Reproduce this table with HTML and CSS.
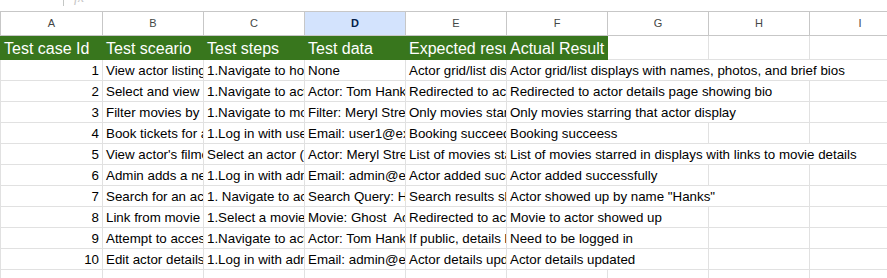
FILE: index.html
```html
<!DOCTYPE html>
<html>
<head>
<meta charset="utf-8">
<link rel="stylesheet" href="styles.css">
</head>
<body>
<div class="sheet">
  <div class="topbar">
    <span class="fxsep"></span>
    <span class="fx">fx</span>
  </div>
  <div class="row colhead">
    <div class="c first">A</div>
    <div class="c">B</div>
    <div class="c">C</div>
    <div class="c sel">D</div>
    <div class="c">E</div>
    <div class="c">F</div>
    <div class="c">G</div>
    <div class="c">H</div>
    <div class="c">I</div>
  </div>
  <div class="row hdr">
    <div class="c g first">Test case Id</div>
    <div class="c g">Test sceario</div>
    <div class="c g">Test steps</div>
    <div class="c g">Test data</div>
    <div class="c g">Expected result</div>
    <div class="c g">Actual Result</div>
    <div class="c"></div>
    <div class="c"></div>
    <div class="c"></div>
  </div>

  <div class="row data">
    <div class="c first num">1</div>
    <div class="c">View actor listing page</div>
    <div class="c">1.Navigate to home page</div>
    <div class="c">None</div>
    <div class="c">Actor grid/list displays with names</div>
    <div class="c s4">Actor grid/list displays with names, photos, and brief bios</div>
  </div>
  <div class="row data">
    <div class="c first num">2</div>
    <div class="c">Select and view actor details</div>
    <div class="c">1.Navigate to actors page</div>
    <div class="c">Actor: Tom Hanks</div>
    <div class="c">Redirected to actor details page</div>
    <div class="c s3">Redirected to actor details page showing bio</div>
    <div class="c"></div>
  </div>
  <div class="row data">
    <div class="c first num">3</div>
    <div class="c">Filter movies by actor</div>
    <div class="c">1.Navigate to movies page</div>
    <div class="c">Filter: Meryl Streep</div>
    <div class="c">Only movies starring that actor</div>
    <div class="c s3">Only movies starring that actor display</div>
    <div class="c"></div>
  </div>
  <div class="row data">
    <div class="c first num">4</div>
    <div class="c">Book tickets for a movie</div>
    <div class="c">1.Log in with user account</div>
    <div class="c">Email: user1@example.com</div>
    <div class="c">Booking succeeds</div>
    <div class="c s2">Booking succeess</div>
    <div class="c"></div>
    <div class="c"></div>
  </div>
  <div class="row data">
    <div class="c first num">5</div>
    <div class="c">View actor's filmography</div>
    <div class="c">Select an actor (Meryl Streep)</div>
    <div class="c">Actor: Meryl Streep</div>
    <div class="c">List of movies starred in</div>
    <div class="c s4">List of movies starred in displays with links to movie details</div>
  </div>
  <div class="row data">
    <div class="c first num">6</div>
    <div class="c">Admin adds a new actor</div>
    <div class="c">1.Log in with admin account</div>
    <div class="c">Email: admin@example.com</div>
    <div class="c">Actor added successfully</div>
    <div class="c s2">Actor added successfully</div>
    <div class="c"></div>
    <div class="c"></div>
  </div>
  <div class="row data">
    <div class="c first num">7</div>
    <div class="c">Search for an actor</div>
    <div class="c">1. Navigate to actors page</div>
    <div class="c">Search Query: Hanks</div>
    <div class="c">Search results show</div>
    <div class="c s3">Actor showed up by name "Hanks"</div>
    <div class="c"></div>
  </div>
  <div class="row data">
    <div class="c first num">8</div>
    <div class="c">Link from movie to actor</div>
    <div class="c">1.Select a movie</div>
    <div class="c">Movie: Ghost&nbsp; Actor: Patrick</div>
    <div class="c">Redirected to actor page</div>
    <div class="c s2">Movie to actor showed up</div>
    <div class="c"></div>
    <div class="c"></div>
  </div>
  <div class="row data">
    <div class="c first num">9</div>
    <div class="c">Attempt to access actor page</div>
    <div class="c">1.Navigate to actor page</div>
    <div class="c">Actor: Tom Hanks</div>
    <div class="c">If public, details load</div>
    <div class="c s2">Need to be logged in</div>
    <div class="c"></div>
    <div class="c"></div>
  </div>
  <div class="row data">
    <div class="c first num">10</div>
    <div class="c">Edit actor details</div>
    <div class="c">1.Log in with admin account</div>
    <div class="c">Email: admin@example.com</div>
    <div class="c">Actor details updated</div>
    <div class="c s2">Actor details updated</div>
    <div class="c"></div>
    <div class="c"></div>
  </div>
  <div class="row data">
    <div class="c first"></div>
    <div class="c"></div>
    <div class="c"></div>
    <div class="c"></div>
    <div class="c"></div>
    <div class="c"></div>
    <div class="c"></div>
    <div class="c"></div>
    <div class="c"></div>
  </div>
</div>
</body>
</html>
```

FILE: styles.css
```css
* { box-sizing: border-box; }
html, body {
  margin: 0;
  padding: 0;
  background: #ffffff;
  overflow: hidden;
}
body {
  width: 887px;
  height: 278px;
  font-family: Arial, "Liberation Sans", sans-serif;
  color: #000000;
}
.sheet {
  width: 887px;
  overflow: hidden;
}
.topbar {
  height: 11px;
  position: relative;
  overflow: hidden;
}
.fxsep {
  position: absolute;
  left: 63px;
  top: 0;
  width: 1px;
  height: 6px;
  background: #c4c7c5;
}
.fx {
  position: absolute;
  left: 74px;
  top: -10px;
  font-family: "Liberation Serif", serif;
  font-style: italic;
  font-size: 14px;
  color: #c8c8c8;
}
.row {
  display: grid;
  grid-template-columns: 103px repeat(8, 101px);
  width: 911px;
}
.c {
  border-right: 1px solid #e1e1e1;
  border-bottom: 1px solid #e1e1e1;
  white-space: nowrap;
  overflow: hidden;
  padding: 0 3px;
}
.c.first {
  border-left: 1px solid #e1e1e1;
}
.colhead {
  height: 25px;
  border-top: 1px solid #c7c7c7;
}
.colhead .c {
  border-color: #c7c7c7;
  text-align: center;
  font-size: 11px;
  line-height: 23px;
  color: #444746;
}
.colhead .c.sel {
  background: #d3e3fd;
  color: #041e49;
  font-weight: bold;
}
.hdr {
  height: 24px;
}
.hdr .c {
  font-size: 16px;
  line-height: 19px;
  padding-top: 3px;
}
.hdr .c.g {
  background: #38761d;
  color: #ffffff;
  border-color: #38761d;
}
.data {
  height: 21px;
}
.data .c {
  font-size: 13.33px;
  line-height: 16px;
  padding-top: 3px;
}
.num {
  text-align: right;
}
.s2 { grid-column: span 2; }
.s3 { grid-column: span 3; }
.s4 { grid-column: span 4; }
```
